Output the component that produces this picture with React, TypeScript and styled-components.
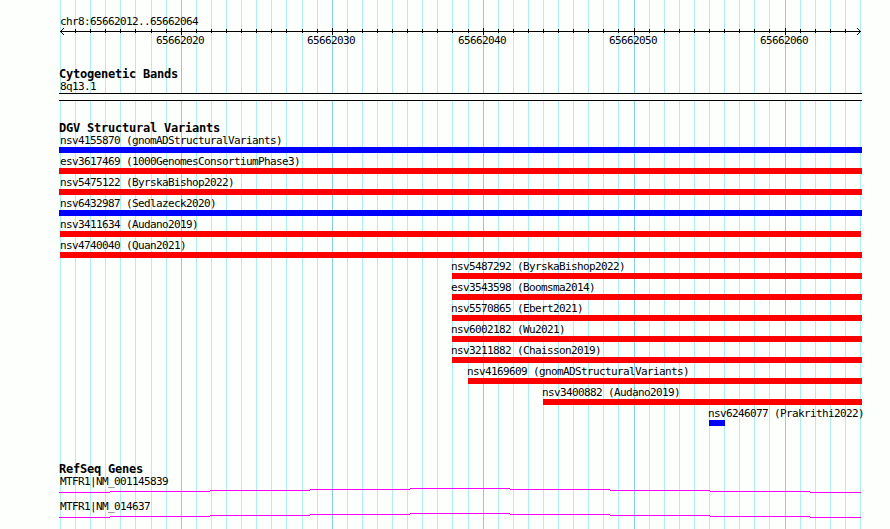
import React from 'react';
import styled, { createGlobalStyle } from 'styled-components';

const GlobalStyle = createGlobalStyle`
  * { box-sizing: border-box; }
  html, body { margin: 0; padding: 0; background: #fdfffc; overflow: hidden; }
`;

const Browser = styled.main`
  position: relative;
  width: 890px;
  height: 529px;
  overflow: hidden;
  background: #fdfffc;
  color: #000;
  font-family: 'DejaVu Sans Mono', 'Liberation Mono', monospace;
`;

const Grid = styled.svg`
  position: absolute;
  inset: 0;
  display: block;
`;

const Tracks = styled.div`
  position: relative;
  display: flex;
  flex-direction: column;
  padding: 16px 0 0 59px;
`;

const Label = styled.div<{ $indent?: number }>`
  height: 11px;
  margin-left: ${(p) => p.$indent ?? 1}px;
  font-size: 11px;
  line-height: 11px;
  letter-spacing: -0.622px;
  white-space: pre;
`;

const Heading = styled.h2`
  height: 13px;
  margin: 0;
  font-size: 12px;
  line-height: 12px;
  font-weight: 700;
  letter-spacing: -0.224px;
  white-space: pre;
`;

const Ruler = styled.section`
  height: 52px;
`;

const Axis = styled.svg`
  display: block;
  height: 8px;
`;

const Scale = styled.div`
  display: flex;
  gap: 102px;
  padding-left: 96px;
`;

const Cytogenetic = styled.section`
  height: 54px;
`;

const Band = styled.div`
  width: 803px;
  height: 8px;
  margin-top: 1px;
  border: solid #000;
  border-width: 1px 0;
  background: #fdfffc;
`;

const Variants = styled.section`
  height: 341px;
`;

const Variant = styled.div`
  display: flex;
  flex-direction: column;
  height: 21px;
`;

const Bar = styled.div<{ $start: number; $length: number; $tone: string }>`
  width: ${(p) => p.$length}px;
  height: 6px;
  margin: 1px 0 0 ${(p) => p.$start}px;
  background: ${(p) => p.$tone};
`;

const Gene = styled.div`
  height: 25px;
`;

const Intron = styled.svg`
  display: block;
  height: 6px;
`;

const RED = '#ff0000';
const BLUE = '#0000ff';

const variants = [
  { name: 'nsv4155870 (gnomADStructuralVariants)', start: 0, end: 803, tone: BLUE, label: 1 },
  { name: 'esv3617469 (1000GenomesConsortiumPhase3)', start: 0, end: 803, tone: RED, label: 1 },
  { name: 'nsv5475122 (ByrskaBishop2022)', start: 0, end: 803, tone: RED, label: 1 },
  { name: 'nsv6432987 (Sedlazeck2020)', start: 0, end: 803, tone: BLUE, label: 1 },
  { name: 'nsv3411634 (Audano2019)', start: 1, end: 802, tone: RED, label: 1 },
  { name: 'nsv4740040 (Quan2021)', start: 1, end: 803, tone: RED, label: 1 },
  { name: 'nsv5487292 (ByrskaBishop2022)', start: 393, end: 803, tone: RED, label: 392 },
  { name: 'esv3543598 (Boomsma2014)', start: 393, end: 803, tone: RED, label: 392 },
  { name: 'nsv5570865 (Ebert2021)', start: 393, end: 803, tone: RED, label: 392 },
  { name: 'nsv6002182 (Wu2021)', start: 393, end: 803, tone: RED, label: 392 },
  { name: 'nsv3211882 (Chaisson2019)', start: 393, end: 803, tone: RED, label: 392 },
  { name: 'nsv4169609 (gnomADStructuralVariants)', start: 409, end: 803, tone: RED, label: 408 },
  { name: 'nsv3400882 (Audano2019)', start: 484, end: 803, tone: RED, label: 483 },
  { name: 'nsv6246077 (Prakrithi2022)', start: 650, end: 666, tone: BLUE, label: 649 },
];

const genes = ['MTFR1|NM_001145839', 'MTFR1|NM_014637'];
const scale = ['65662020', '65662030', '65662040', '65662050', '65662060'];
const bases = Array.from({ length: 54 }, (_, i) => ({
  x: Math.round((i * 800) / 53),
  major: i % 10 === 8,
}));
const intronSteps = [
  [0, 51, 4], [51, 151, 3], [151, 251, 2], [251, 351, 1], [351, 451, 0],
  [451, 551, 1], [551, 651, 2], [651, 751, 3], [751, 802, 4],
];

export default function App() {
  return (
    <Browser>
      <GlobalStyle />
      <Grid width="890" height="529" shapeRendering="crispEdges">
        {bases.map((b) => (
          <rect key={b.x} x={60 + b.x} y="0" width="1" height="529" fill={b.major ? '#87ceeb' : '#afeeee'} />
        ))}
      </Grid>
      <Tracks>
        <Ruler>
          <Label>chr8:65662012..65662064</Label>
          <Axis width="803" height="8" shapeRendering="crispEdges">
            <rect x="1" y="4" width="801" height="1" />
            {bases.slice(1, -1).map((b) => (
              <rect key={b.x} x={1 + b.x} y={b.major ? 1 : 2} width="1" height={b.major ? 7 : 4} />
            ))}
            {[1, 2, 3].map((d) => (
              <React.Fragment key={d}>
                <rect x={1 + d} y={4 - d} width="1" height="1" />
                <rect x={1 + d} y={4 + d} width="1" height="1" />
                <rect x={801 - d} y={4 - d} width="1" height="1" />
                <rect x={801 - d} y={4 + d} width="1" height="1" />
              </React.Fragment>
            ))}
          </Axis>
          <Scale>
            {scale.map((s) => <Label key={s}>{s}</Label>)}
          </Scale>
        </Ruler>
        <Cytogenetic>
          <Heading>Cytogenetic Bands</Heading>
          <Label>8q13.1</Label>
          <Band />
        </Cytogenetic>
        <Variants>
          <Heading>DGV Structural Variants</Heading>
          {variants.map((v) => (
            <Variant key={v.name}>
              <Label $indent={v.label}>{v.name}</Label>
              <Bar $start={v.start} $length={v.end - v.start} $tone={v.tone} />
            </Variant>
          ))}
        </Variants>
        <section>
          <Heading>RefSeq Genes</Heading>
          {genes.map((g) => (
            <Gene key={g}>
              <Label>{g}</Label>
              <Intron width="803" height="6" shapeRendering="crispEdges">
                {intronSteps.map(([from, to, y]) => (
                  <rect key={from} x={from} y={y + 1} width={to - from} height="1" fill="#ff00ff" />
                ))}
              </Intron>
            </Gene>
          ))}
        </section>
      </Tracks>
    </Browser>
  );
}
